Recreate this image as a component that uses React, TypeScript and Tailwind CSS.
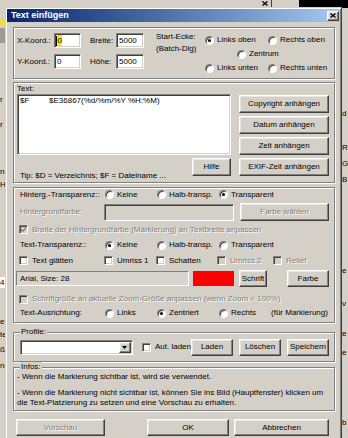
import React from "react";

const sunken =
  "border border-t-[#808080] border-l-[#808080] border-b-white border-r-white shadow-[inset_1px_1px_0_#404040,inset_-1px_-1px_0_#d4d0c8]";
const raised =
  "border border-t-white border-l-white border-b-[#404040] border-r-[#404040] shadow-[inset_-1px_-1px_0_#808080,inset_1px_1px_0_#e8e6e0]";
const etched = "border border-[#808080] shadow-[1px_1px_0_#fff,inset_1px_1px_0_#fff]";
const dim = "text-[#808080] [text-shadow:1px_1px_0_#fff]";

type BtnProps = { children: React.ReactNode; className?: string; disabled?: boolean };

function Btn({ children, className = "", disabled = false }: BtnProps) {
  return (
    <div
      className={`${raised} bg-[#d4d0c8] flex items-center justify-center shrink-0 ${disabled ? dim : ""} ${className}`}
    >
      {children}
    </div>
  );
}

type OptProps = { label: string; checked?: boolean; disabled?: boolean; className?: string };

function Radio({ label, checked = false, className = "" }: OptProps) {
  return (
    <div className={`flex items-center gap-[3px] shrink-0 ${className}`}>
      <span className="w-[9px] h-[9px] rounded-full bg-white border border-t-[#808080] border-l-[#808080] border-b-white border-r-white shadow-[inset_1px_1px_0_#404040] flex items-center justify-center shrink-0">
        {checked && <span className="w-[3px] h-[3px] rounded-full bg-black" />}
      </span>
      <span className="whitespace-nowrap">{label}</span>
    </div>
  );
}

function Check({ label, checked = false, disabled = false, className = "" }: OptProps) {
  return (
    <div className={`flex items-center gap-[4px] shrink-0 ${className}`}>
      <span
        className={`w-[9px] h-[9px] ${sunken} ${disabled ? "bg-[#d4d0c8]" : "bg-white"} flex items-center justify-center shrink-0`}
      >
        {checked && (
          <svg width="7" height="7" viewBox="0 0 7 7">
            <path
              d="M1 3.4 L2.8 5.2 L6 1.6"
              stroke={disabled ? "#808080" : "#000"}
              strokeWidth="1.4"
              fill="none"
            />
          </svg>
        )}
      </span>
      <span className={`whitespace-nowrap ${disabled ? dim : ""}`}>{label}</span>
    </div>
  );
}

export default function App() {
  return (
    <div className="relative w-[348px] h-[438px] overflow-hidden bg-[#d4d0c8] text-[8px] leading-[10px] text-black font-['Liberation_Sans',Arial,sans-serif]">
      {/* windows behind the dialog */}
      <div className="absolute right-0 top-0 w-[49px] h-[8px] bg-black" />
      <svg className="absolute left-[262px] top-[1px]" width="6" height="5" viewBox="0 0 6 5">
        <path d="M0.5 0.5 L5.5 4.5 M5.5 0.5 L0.5 4.5" stroke="#000" strokeWidth="1.3" />
      </svg>
      <div className="absolute left-[271px] top-0 w-px h-[7px] bg-[#404040]" />
      <div className="absolute left-0 top-[19px] w-[5px] h-[7px] bg-[#f3df3a]" />
      <div className="absolute left-0 top-[28px] w-[6px] h-[15px] bg-[#9c9a94]" />
      <div className="absolute left-0 top-[277px] w-[6px] h-[11px] bg-white leading-[11px]">4</div>
      <span className="absolute left-0 top-[95px]">r</span>
      <span className="absolute left-0 top-[120px]">r</span>
      <span className="absolute left-0 top-[167px]">n</span>
      <span className="absolute left-0 top-[180px]">Hi</span>
      <span className="absolute left-0 top-[317px]">e</span>
      <span className="absolute left-0 top-[330px]">te</span>
      <span className="absolute left-0 top-[345px]">ße</span>
      <span className="absolute left-0 top-[361px]">ne</span>
      <span className="absolute left-[342px] top-[109px]">d</span>
      <span className="absolute left-[342px] top-[143px]">R</span>
      <span className="absolute left-[342px] top-[159px]">G</span>
      <span className="absolute left-[342px] top-[175px]">B</span>
      <span className="absolute left-[342px] top-[266px]">e</span>
      <span className="absolute left-[342px] top-[299px]">v</span>
      <span className="absolute left-[342px] top-[329px]">e</span>
      <span className="absolute left-[342px] top-[348px]">e</span>
      <span className="absolute left-[342px] top-[418px]">b</span>

      {/* dialog window */}
      <div className="absolute left-[5px] top-[7px] w-[337px] h-[440px] bg-[#d4d0c8] border border-[#d4d0c8] border-r-[#404040] border-b-[#404040] shadow-[inset_1px_1px_0_#fff,inset_-1px_-1px_0_#808080] p-[1px]">
        <div className="h-[13px] flex items-center justify-between bg-gradient-to-r from-[#0a246a] to-[#a6caf0] pl-[4px] pr-[1px]">
          <span className="text-white font-bold text-[9px] leading-[13px]">Text einfügen</span>
          <div className={`${raised} bg-[#d4d0c8] w-[12px] h-[10px] flex items-center justify-center`}>
            <svg width="6" height="5" viewBox="0 0 6 5">
              <path d="M0.5 0.5 L5.5 4.5 M5.5 0.5 L0.5 4.5" stroke="#000" strokeWidth="1.3" />
            </svg>
          </div>
        </div>

        <div className="flex flex-col pl-[6px] pr-[5px]">
          {/* coordinates */}
          <div className={`${etched} mt-[5px] h-[52px] flex`}>
            <div className="flex flex-col gap-[6px] pl-[3px] pt-[5px]">
              <div className="flex items-center h-[15px]">
                <span className="w-[37px]">X-Koord.:</span>
                <div className={`${sunken} bg-white w-[27px] h-[15px] flex items-center pl-[1px]`}>
                  <span className="w-px h-[10px] bg-black" />
                  <span className="bg-[#ffe600] h-[11px] leading-[11px] px-[0.5px]">0</span>
                </div>
                <span className="ml-[9px] w-[26px]">Breite:</span>
                <div className={`${sunken} bg-white w-[28px] h-[15px] flex items-center pl-[2px]`}>5000</div>
              </div>
              <div className="flex items-center h-[15px]">
                <span className="w-[37px]">Y-Koord.:</span>
                <div className={`${sunken} bg-white w-[27px] h-[15px] flex items-center pl-[2px]`}>0</div>
                <span className="ml-[9px] w-[26px]">Höhe:</span>
                <div className={`${sunken} bg-white w-[28px] h-[15px] flex items-center pl-[2px]`}>5000</div>
              </div>
            </div>
            <div className="ml-[12px] w-[49px] pt-[3px] leading-[12px]">
              <div>Start-Ecke:</div>
              <div>(Batch-Dlg)</div>
            </div>
            <div className="flex flex-col pt-[5px]">
              <div className="flex items-center h-[14px]">
                <Radio label="Links oben" checked className="w-[63px]" />
                <Radio label="Rechts oben" />
              </div>
              <div className="flex items-center h-[14px] pl-[32px]">
                <Radio label="Zentrum" />
              </div>
              <div className="flex items-center h-[14px]">
                <Radio label="Links unten" className="w-[63px]" />
                <Radio label="Rechts unten" />
              </div>
            </div>
          </div>

          {/* text */}
          <div className={`${etched} mt-[3px] h-[101px] flex`}>
            <div className="flex flex-col pl-[3px] w-[217px]">
              <div className="h-[11px] leading-[11px]">Text:</div>
              <div className={`${sunken} bg-white w-[214px] h-[61px] pl-[2px] pt-[1px] flex items-start`}>
                <span className="w-[29px]">$F</span>
                <span>$E36867(%d/%m/%Y %H:%M)</span>
              </div>
              <div className="flex justify-between mt-[3px]">
                <span className="pl-[3px] mt-[13px] whitespace-nowrap">Tip: $D = Verzeichnis; $F = Dateiname ...</span>
                <Btn className="w-[39px] h-[18px]">Hilfe</Btn>
              </div>
            </div>
            <div className="ml-[8px] w-[90px] pt-[12px] flex flex-col gap-[3px]">
              <Btn className="h-[18px]">Copyright anhängen</Btn>
              <Btn className="h-[18px]">Datum anhängen</Btn>
              <Btn className="h-[18px]">Zeit anhängen</Btn>
              <Btn className="h-[18px]">EXIF-Zeit anhängen</Btn>
            </div>
          </div>

          {/* appearance */}
          <div className={`${etched} mt-[4px] h-[136px] flex flex-col`}>
            <div className="flex items-center h-[13px] pl-[6px]">
              <span className="w-[85px] shrink-0">Hinterg.-Transparenz::</span>
              <Radio label="Keine" className="w-[52px]" />
              <Radio label="Halb-transp." className="w-[62px]" />
              <Radio label="Transparent" checked />
            </div>
            <div className="flex items-center h-[18px] mt-[2px] pl-[6px]">
              <span className={`w-[84px] shrink-0 ${dim}`}>Hintergrundfarbe:</span>
              <div className={`${sunken} bg-[#d4d0c8] w-[130px] h-[17px]`} />
              <Btn disabled className="ml-[6px] w-[89px] h-[18px]">
                Farbe wählen
              </Btn>
            </div>
            <div className="flex items-center h-[11px] mt-[3px] pl-[5px]">
              <Check label="Breite der Hintergrundfarbe (Markierung) an Textbreite anpassen" checked disabled />
            </div>
            <div className="flex items-center h-[12px] mt-[4px] pl-[6px]">
              <span className="w-[85px] shrink-0">Text-Transparenz::</span>
              <Radio label="Keine" checked className="w-[52px]" />
              <Radio label="Halb-transp." className="w-[62px]" />
              <Radio label="Transparent" />
            </div>
            <div className="flex items-center h-[11px] mt-[4px] pl-[5px]">
              <Check label="Text glätten" className="w-[85px]" />
              <Check label="Umriss 1" className="w-[52px]" />
              <Check label="Schatten" className="w-[61px]" />
              <Check label="Umriss 2" disabled className="w-[56px]" />
              <Check label="Relief" disabled />
            </div>
            <div className="flex items-center h-[17px] mt-[4px] pl-[2px]">
              <div className="w-[173px] h-[15px] border border-t-[#808080] border-l-[#808080] border-b-white border-r-white bg-[#d8d5ce] flex items-center pl-[3px]">
                Arial, Size: 28
              </div>
              <div className="ml-[4px] w-[41px] h-[15px] bg-[#ff0000]" />
              <Btn className="ml-[5px] w-[28px] h-[17px]">Schrift</Btn>
              <Btn className="ml-[20px] w-[42px] h-[17px]">Farbe</Btn>
            </div>
            <div className="flex items-center h-[10px] mt-[7px] pl-[5px]">
              <Check label="Schriftgröße an aktuelle Zoom-Größe anpassen (wenn Zoom < 100%)" disabled />
            </div>
            <div className="flex items-center h-[12px] mt-[3px] pl-[6px]">
              <span className="w-[85px] shrink-0">Text-Ausrichtung:</span>
              <Radio label="Links" className="w-[52px]" />
              <Radio label="Zentriert" checked className="w-[62px]" />
              <Radio label="Rechts" className="w-[52px]" />
              <span className="whitespace-nowrap">(für Markierung)</span>
            </div>
          </div>

          {/* profiles */}
          <div className={`${etched} relative mt-[9px] h-[30px] flex items-center pl-[6px] pr-[5px]`}>
            <span className="absolute left-[6px] top-[-6px] bg-[#d4d0c8] px-px">Profile:</span>
            <div className={`${sunken} bg-white w-[113px] h-[15px] flex justify-end p-px`}>
              <div className={`${raised} bg-[#d4d0c8] w-[12px] h-full flex items-center justify-center`}>
                <svg width="5" height="3" viewBox="0 0 5 3">
                  <path d="M0 0 L5 0 L2.5 3 Z" fill="#000" />
                </svg>
              </div>
            </div>
            <Check label="Aut. laden" className="ml-[9px]" />
            <div className="ml-auto flex gap-[6px]">
              <Btn className="w-[42px] h-[17px]">Laden</Btn>
              <Btn className="w-[42px] h-[17px]">Löschen</Btn>
              <Btn className="w-[42px] h-[17px]">Speichern</Btn>
            </div>
          </div>

          {/* infos */}
          <div className={`${etched} relative mt-[5px] h-[44px] pl-[3px] pt-[4px]`}>
            <span className="absolute left-[6px] top-[-6px] bg-[#d4d0c8] px-px">Infos:</span>
            <div className="whitespace-nowrap">- Wenn die Markierung sichtbar ist, wird sie verwendet.</div>
            <div className="mt-[6px] whitespace-nowrap">
              - Wenn die Markierung nicht sichtbar ist, können Sie ins Bild (Hauptfenster) klicken um
            </div>
            <div className="whitespace-nowrap">die Text-Platzierung zu setzen und eine Vorschau zu erhalten.</div>
          </div>

          {/* dialog buttons */}
          <div className="flex mt-[8px]">
            <Btn disabled className="ml-[3px] w-[89px] h-[17px]">
              Vorschau
            </Btn>
            <Btn className="ml-[42px] w-[82px] h-[17px]">OK</Btn>
            <Btn className="ml-[5px] w-[95px] h-[17px]">Abbrechen</Btn>
          </div>
        </div>
      </div>
    </div>
  );
}
